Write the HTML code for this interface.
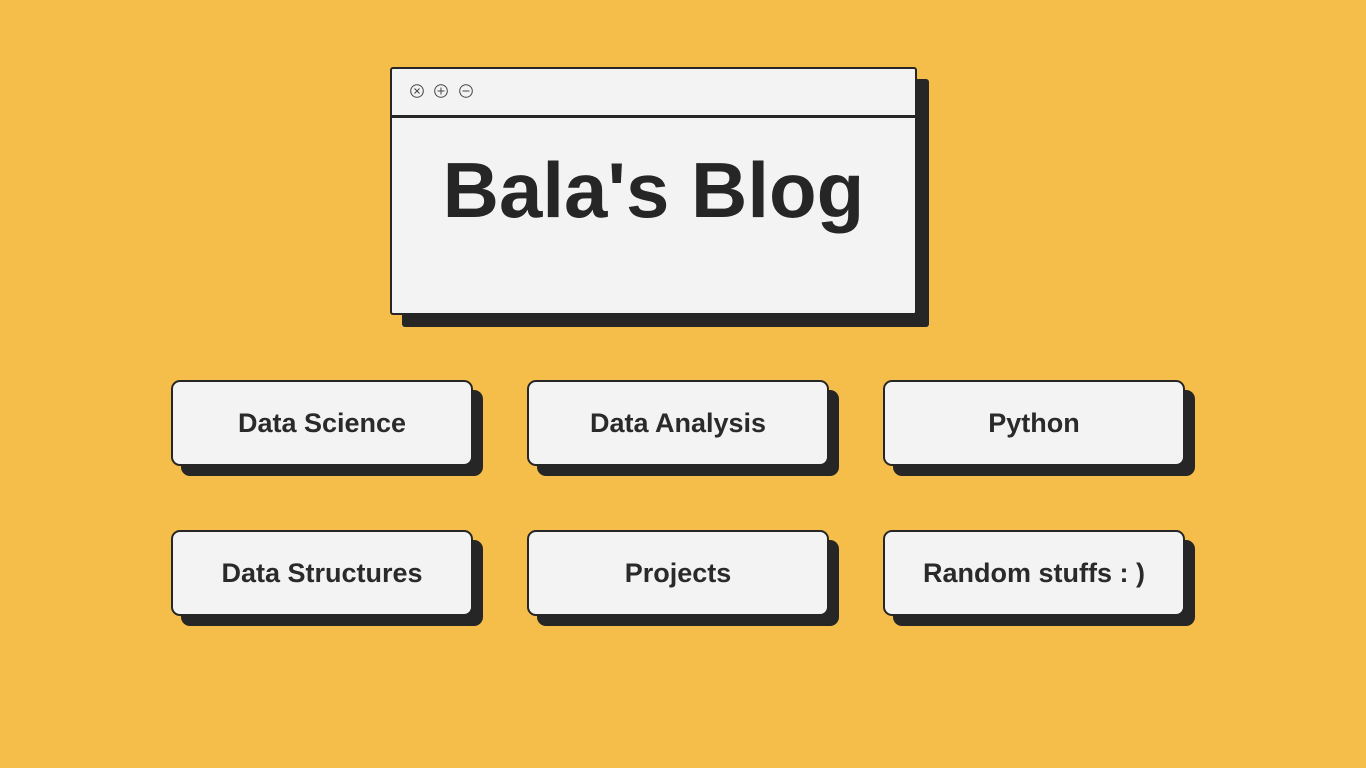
<!DOCTYPE html>
<html><head><style>
body{margin:0;width:1366px;height:768px;background:#f5be4b;position:relative;overflow:hidden;font-family:"Liberation Sans",sans-serif;}
.win{position:absolute;left:390px;top:67px;width:523px;height:244px;background:#f3f3f3;border:2px solid #262626;border-radius:3px;box-shadow:12px 12px 0 #262626;}
.bar{position:absolute;left:0;right:0;top:46px;height:3px;background:#262626;}
.ic{position:absolute;top:15px;width:14px;height:14px;}
.title{position:absolute;left:0;right:0;top:76px;text-align:center;font-size:78px;font-weight:bold;color:#262626;letter-spacing:0;}
.btn{position:absolute;width:298px;height:82px;background:#f3f3f3;border:2px solid #262626;border-radius:9px;box-shadow:10px 10px 0 #262626;display:flex;align-items:center;justify-content:center;font-size:27px;font-weight:bold;color:#2a2a2a;}
</style></head><body>
<div class="win">
<svg class="ic" style="left:18px" viewBox="0 0 14 14"><circle cx="7" cy="7" r="6.3" fill="none" stroke="#444" stroke-width="1"/><path d="M4.5 4.5L9.5 9.5M9.5 4.5L4.5 9.5" stroke="#444" stroke-width="1"/></svg>
<svg class="ic" style="left:42px" viewBox="0 0 14 14"><circle cx="7" cy="7" r="6.3" fill="none" stroke="#444" stroke-width="1"/><path d="M3.5 7H10.5M7 3.5V10.5" stroke="#444" stroke-width="1"/></svg>
<svg class="ic" style="left:67px" viewBox="0 0 14 14"><circle cx="7" cy="7" r="6.3" fill="none" stroke="#444" stroke-width="1"/><path d="M3.5 7H10.5" stroke="#444" stroke-width="1"/></svg>
<div class="bar"></div>
<div class="title">Bala's Blog</div>
</div>
<div class="btn" style="left:171px;top:380px">Data Science</div>
<div class="btn" style="left:527px;top:380px">Data Analysis</div>
<div class="btn" style="left:883px;top:380px">Python</div>
<div class="btn" style="left:171px;top:530px">Data Structures</div>
<div class="btn" style="left:527px;top:530px">Projects</div>
<div class="btn" style="left:883px;top:530px">Random stuffs : )</div>
</body></html>
